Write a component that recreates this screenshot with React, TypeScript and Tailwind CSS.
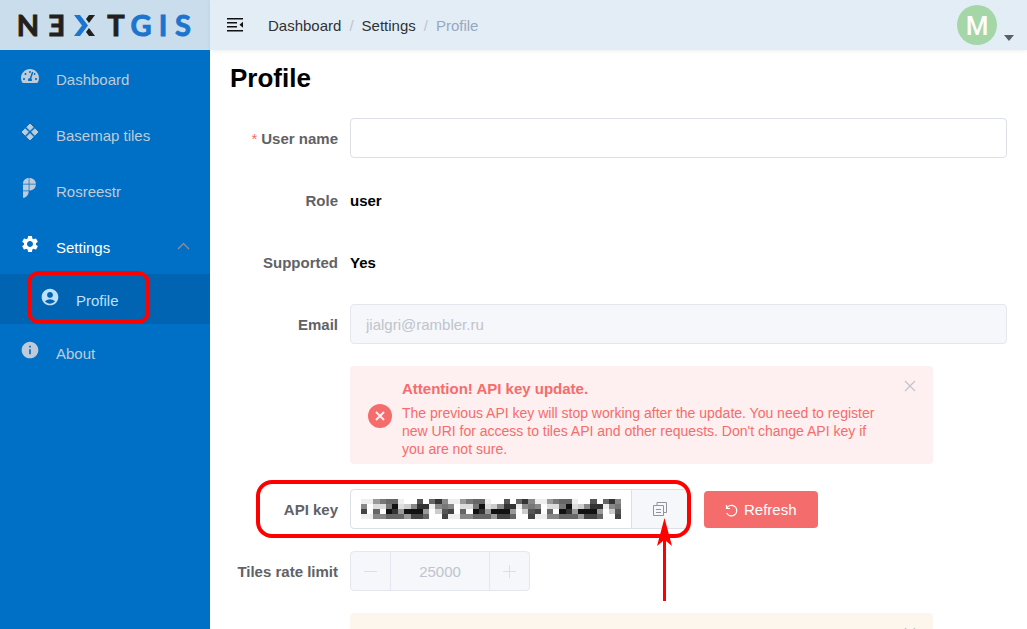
import React from "react";
import { FaTachometerAlt } from "react-icons/fa";
import { MdAccountCircle, MdInfo, MdSettings } from "react-icons/md";

const keyMosaic = [
  "ee9766eff5f638",
  "8fdd71dc833e87",
  "4f6f1391119fc5",
  "ee886669446ff4",
];

function Logo() {
  return (
    <svg width="174" height="44" viewBox="0 -10 174 44" role="img" aria-label="NextGIS" className="block">
      <g fontFamily="Lato, sans-serif" fontWeight="700" fontSize="29" fill="#231f20" stroke="#231f20" strokeWidth="0.9" textAnchor="middle">
        <text x="10" y="23">N</text>
        <text x="39" y="23">Ǝ</text>
        <text x="98" y="23">T</text>
        <g fill="#1b75cf" stroke="#1b75cf">
          <text x="123" y="23">G</text>
          <text x="145" y="23">I</text>
          <text x="165" y="23">S</text>
        </g>
      </g>
      <path d="M56 2h6l8 10.500-8 10.500h-6l8-10.500z" fill="#1b75cf" />
      <path d="M71 2h6l-6 8-3-4zM68 19l3-4 6 8h-6z" fill="#231f20" />
    </svg>
  );
}

function TilesIcon() {
  return (
    <svg width="20" height="20" viewBox="0 0 20 20" fill="currentColor" stroke="currentColor" strokeLinejoin="round" strokeWidth="1">
      <path d="M10 2l3.200 3.200L10 8.400 6.800 5.200zM10 11.600l3.200 3.200L10 18l-3.200-3.200zM5.200 6.800L8.400 10l-3.200 3.200L2 10zM14.800 6.800L18 10l-3.200 3.200-3.200-3.200z" />
    </svg>
  );
}

function RosreestrIcon() {
  return (
    <svg width="20" height="20" viewBox="0 0 20 20" fill="currentColor">
      <path d="M8.700 0v5.700H3C3 2.500 5.500 0 8.700 0zM9.400 0c3.600 0 6.300 2.300 6.500 5.700H9.400zM3 6.500h5.700v6H3zM9.400 6.500h6.500c-.2 3.700-2.800 6-6.500 6zM3 13.200h5.700c0 3.600-2.200 6.300-5.700 6.600z" />
    </svg>
  );
}

function CloseIcon() {
  return (
    <svg width="12" height="12" viewBox="0 0 12 12" stroke="#c0c4cc" strokeWidth="1.200">
      <path d="M1 1l10 10M11 1L1 11" />
    </svg>
  );
}

function NavItem({ icon, label, active }: { icon: React.ReactNode; label: string; active?: boolean }) {
  return (
    <a
      href="#"
      className={`flex h-14 items-center gap-4 px-5 ${active ? "text-white" : "text-[#bfcbd9]"}`}
    >
      <span className="flex h-6 w-5 items-start justify-center text-xl">{icon}</span>
      <span className="grow pt-1">{label}</span>
      {active && (
        <svg width="13" height="8" viewBox="0 0 13 8" fill="none" stroke="#909399" strokeWidth="1.200">
          <path d="M1 7l5.500-5.500L12 7" />
        </svg>
      )}
    </a>
  );
}

function Sidebar() {
  return (
    <aside className="w-[210px] shrink-0 bg-[#0070c6]">
      <a href="#" className="flex h-[50px] items-center justify-center bg-[#c9dded]">
        <Logo />
      </a>
      <nav>
        <NavItem icon={<FaTachometerAlt className="h-5 w-[18px]" />} label="Dashboard" />
        <NavItem icon={<TilesIcon />} label="Basemap tiles" />
        <NavItem icon={<RosreestrIcon />} label="Rosreestr" />
        <NavItem icon={<MdSettings />} label="Settings" active />
        <div className="relative bg-[#0064b2]">
          <a href="#" className="flex h-[50px] items-center gap-4 pr-5 pl-10 text-[#bfe1ff]">
            <span className="flex h-6 w-5 items-start text-xl">
              <MdAccountCircle />
            </span>
            <span className="pt-1">Profile</span>
          </a>
          <div className="pointer-events-none absolute -top-[3px] left-[27px] h-[53px] w-[123px] rounded-xl border-4 border-[#f00]" />
        </div>
        <NavItem icon={<MdInfo />} label="About" />
      </nav>
    </aside>
  );
}

function Header() {
  return (
    <header className="flex h-[50px] items-center bg-[#e3edf6] pr-[13px] pl-4 shadow-[0_1px_4px_rgba(0,21,41,0.08)]">
      <button type="button" aria-label="Toggle menu">
        <svg width="18" height="16" viewBox="0 0 18 16" fill="#111" className="block">
          <path d="M1 1h16v1.500H1zM1 5h10v1.500H1zM1 9h10v1.500H1zM1 13h16v1.500H1zM17 4.800v6L13.500 7.800z" />
        </svg>
      </button>
      <nav aria-label="Breadcrumb" className="ml-6 flex grow items-center gap-2 pt-0.5 text-[#303133]">
        <a href="#">Dashboard</a>
        <span className="text-[#c0c4cc]">/</span>
        <a href="#">Settings</a>
        <span className="text-[#c0c4cc]">/</span>
        <span className="text-[#97a8be]">Profile</span>
      </nav>
      <button type="button" aria-label="Account menu" className="flex items-end gap-[7px]">
        <span className="flex h-10 w-10 items-center justify-center rounded-full bg-[#a5d6a7] pt-0.5 font-['Roboto',sans-serif] text-[26px] leading-8 font-medium text-white">
          M
        </span>
        <svg width="10" height="10" viewBox="0 0 10 10" fill="#5a5e66" className="block">
          <path d="M0 0h10L5 6z" />
        </svg>
      </button>
    </header>
  );
}

function Row({ label, id, required, children }: { label: string; id?: string; required?: boolean; children: React.ReactNode }) {
  const text = (
    <>
      {required && <span className="mr-1 font-normal text-[#f56c6c]">*</span>}
      {label}
    </>
  );
  const cls = "w-[120px] shrink-0 pt-0.5 pr-3 text-right font-bold text-[#606266]";
  return (
    <div className="relative flex min-h-10 items-center">
      {id ? (
        <label htmlFor={id} className={cls}>{text}</label>
      ) : (
        <span className={cls}>{text}</span>
      )}
      {children}
    </div>
  );
}

function Mosaic() {
  return (
    <svg
      width="260"
      height="20"
      viewBox="0 0 260 20"
      shapeRendering="crispEdges"
      className="pointer-events-none absolute top-[10px] left-[11px]"
    >
      {keyMosaic.map((row, y) =>
        Array.from({ length: 42 }, (_, i) => {
          const c = row[i % 14];
          return <rect key={`${y}-${i}`} x={i * 6.2} y={y * 5} width={6.4} height={5} fill={`#${c}${c}${c}`} />;
        }),
      )}
    </svg>
  );
}

function CopyIcon() {
  return (
    <svg width="14" height="14" viewBox="0 0 14 14" fill="none" stroke="#909399" className="block">
      <path d="M4 3V.5h9.500v10H11M.5 3.500h10v10H.5zM3 7.500h5M3 10.500h5" />
    </svg>
  );
}

export default function App() {
  return (
    <div className="flex h-screen overflow-hidden bg-white font-['Liberation_Sans',Arial,sans-serif] text-[15px] leading-5 text-black">
      <Sidebar />
      <div className="min-w-0 grow">
        <Header />
        <main className="px-5 pt-3">
          <h1 className="text-[26px] leading-8 font-bold">Profile</h1>
          <form className="mt-6 flex flex-col gap-[22px]">
            <Row label="User name" id="username" required>
              <input id="username" className="h-10 min-w-0 grow rounded border border-[#dcdfe6] px-[15px] outline-none" />
            </Row>
            <Row label="Role"><strong className="pt-0.5">user</strong></Row>
            <Row label="Supported"><strong className="pt-0.5">Yes</strong></Row>
            <Row label="Email" id="email">
              <input
                id="email"
                disabled
                defaultValue="jialgri@rambler.ru"
                className="h-10 min-w-0 grow rounded border border-[#e4e7ed] bg-[#f5f7fa] px-[15px] text-[#c0c4cc]"
              />
            </Row>
            <div role="alert" className="mb-[3px] ml-[120px] flex max-w-[583px] items-center gap-2.5 rounded bg-[#fef0f0] pt-2 pr-4 pb-1.5 pl-[18px] text-[#f56c6c]">
              <svg width="24" height="24" viewBox="0 0 24 24" className="shrink-0">
                <circle cx="12" cy="12" r="12" fill="#f56c6c" />
                <path d="M8 8l8 8M16 8l-8 8" stroke="#fef0f0" strokeWidth="2" />
              </svg>
              <div className="min-w-0 grow">
                <strong className="block leading-[30px]">Attention! API key update.</strong>
                <p className="pr-4 text-sm leading-[18px]">
                  The previous API key will stop working after the update. You need to register new URI for access to
                  tiles API and other requests. Don&apos;t change API key if you are not sure.
                </p>
              </div>
              <button type="button" aria-label="Close" className="-ml-2 self-start pt-1.5 pr-px">
                <CloseIcon />
              </button>
            </div>
            <Row label="API key" id="apikey">
              <div className="relative flex w-[338px]">
                <input id="apikey" readOnly className="h-10 min-w-0 grow rounded-l border border-[#dcdfe6] px-[15px] outline-none" />
                <button
                  type="button"
                  aria-label="Copy API key"
                  className="flex w-14 items-center justify-center rounded-r border border-l-0 border-[#dcdfe6] bg-[#f5f7fa]"
                >
                  <CopyIcon />
                </button>
                <Mosaic />
              </div>
              <button type="button" className="ml-4 flex h-[37px] items-center gap-1.5 rounded bg-[#f56c6c] px-[21px] pt-0.5 text-white">
                <svg width="13" height="13" viewBox="0 0 13 13" fill="none" stroke="white" strokeWidth="1.200">
                  <path d="M1.500 1v3.500H5M1.700 4.300A5.300 5.300 0 1 1 1.700 9" />
                </svg>
                Refresh
              </button>
              <div className="pointer-events-none absolute -top-[9px] left-[26px] h-[58px] w-[435px] rounded-2xl border-4 border-[#f00]" />
              <svg width="16" height="84" viewBox="0 0 16 84" fill="#f00" className="pointer-events-none absolute top-7 left-[427px] z-10">
                <path d="M7.500 1L15 29l-6-5v60H6V24l-6 5z" />
              </svg>
            </Row>
            <Row label="Tiles rate limit" id="limit">
              <div className="flex h-10 w-[180px] overflow-hidden rounded border border-[#e4e7ed] bg-[#f5f7fa] text-[#c0c4cc]">
                <button type="button" disabled aria-label="Decrease" className="flex w-10 shrink-0 items-center justify-center border-r border-[#e4e7ed]">
                  <svg width="13" height="13" stroke="#dcdfe6"><path d="M0 6.500h13" /></svg>
                </button>
                <input id="limit" disabled defaultValue="25000" className="min-w-0 grow pt-0.5 text-center" />
                <button type="button" disabled aria-label="Increase" className="flex w-10 shrink-0 items-center justify-center border-l border-[#e4e7ed]">
                  <svg width="13" height="13" stroke="#dcdfe6"><path d="M0 6.500h13M6.500 0v13" /></svg>
                </button>
              </div>
            </Row>
            <div role="alert" className="ml-[120px] flex h-24 max-w-[583px] shrink-0 justify-end rounded bg-[#fdf6ec] pt-3.5 pr-[17px]">
              <button type="button" aria-label="Close" className="self-start">
                <CloseIcon />
              </button>
            </div>
          </form>
        </main>
      </div>
    </div>
  );
}
